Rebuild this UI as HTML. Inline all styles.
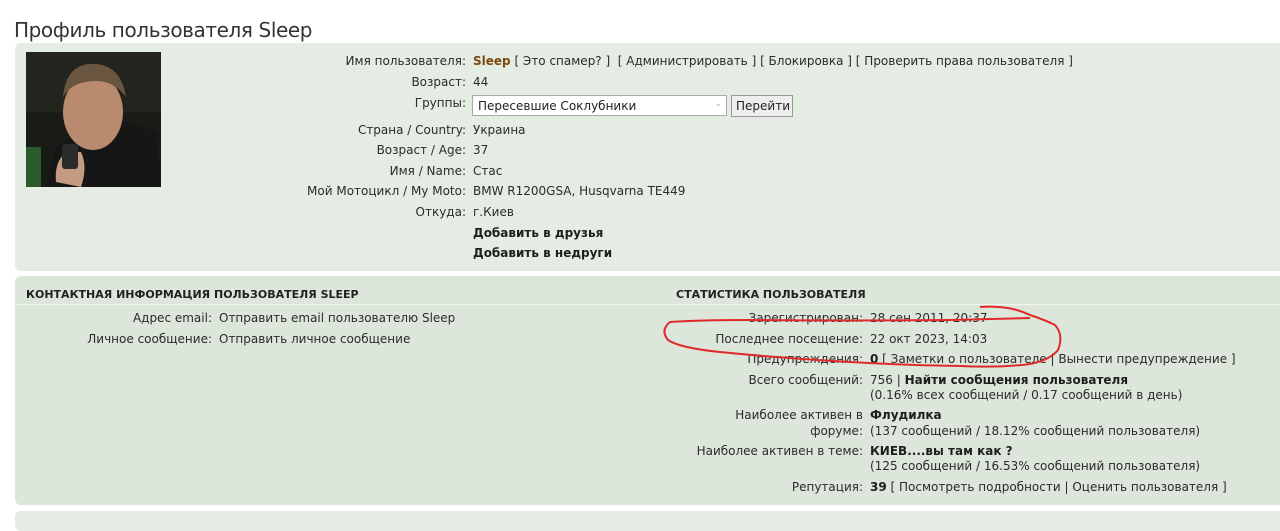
<!DOCTYPE html>
<html><head><meta charset="utf-8"><style>
*{margin:0;padding:0;box-sizing:border-box}
body{width:1280px;height:517px;background:#fff;font-family:"DejaVu Sans","Liberation Sans",sans-serif;font-size:12px;color:#2b2b2b;position:relative;overflow:hidden}
.h1{position:absolute;left:14px;top:18px;font-size:20px;color:#333;font-family:"DejaVu Sans",sans-serif;font-weight:normal;letter-spacing:-0.4px}
.p1{position:absolute;left:15px;top:43px;width:1280px;height:228px;background:#e4ece3;border-radius:6px}
.p2{position:absolute;left:15px;top:276px;width:1280px;height:229px;background:#dce6da;border-radius:6px}
.p3{position:absolute;left:15px;top:511px;width:1280px;height:20px;background:#e4ece3;border-radius:6px}
.l{position:absolute;text-align:right;white-space:nowrap}
.v{position:absolute;white-space:nowrap}
.t{position:absolute;left:0;top:1px;width:1280px;height:517px}
b{color:#1e1e1e}
.hd{position:absolute;font-size:11px;font-weight:bold;color:#222;white-space:nowrap}
.line{position:absolute;height:1px;background:#f2f6f1}
</style></head><body>
<div class="h1">Профиль пользователя Sleep</div>
<div class="p1"></div>
<div class="p2"></div>
<div class="p3"></div>

<svg style="position:absolute;left:26px;top:52px" width="135" height="135" viewBox="0 0 135 135">
<rect width="135" height="135" fill="#1a1a16"/>
<rect x="0" y="0" width="135" height="60" fill="#23241d"/>
<path d="M20 135 L30 95 L60 75 L100 70 L130 80 L135 135Z" fill="#161616"/>
<ellipse cx="67" cy="60" rx="30" ry="38" fill="#b88a6e"/>
<path d="M37 45 Q40 10 70 12 Q95 14 100 45 Q85 25 60 30 Q45 32 37 45Z" fill="#6a5640"/>
<rect x="0" y="95" width="15" height="40" fill="#2a5a2a"/>
<path d="M30 130 Q28 110 40 100 L55 100 Q62 115 55 135Z" fill="#c49a80"/>
<rect x="36" y="92" width="16" height="25" fill="#2b2b2b" rx="3"/>
</svg>

<div class="t">
<div class="l" style="right:814px;top:53px">Имя пользователя:</div>
<div class="v" style="left:473px;top:53px"><b style="color:#7a4a10">Sleep</b> [ Это спамер? ]&nbsp; [ Администрировать ] [ Блокировка ] [ Проверить права пользователя ]</div>
<div class="l" style="right:814px;top:74px">Возраст:</div><div class="v" style="left:473px;top:74px">44</div>
<div class="l" style="right:814px;top:95px">Группы:</div>
<div class="v" style="left:472px;top:94px;width:255px;height:21px;background:#fff;border:1px solid #aaa;padding:3px 0 0 5px;color:#222">Пересевшие Соклубники<span style="position:absolute;right:4px;top:3px;color:#aaa;font-size:9px">⌄</span></div>
<div class="v" style="left:731px;top:94px;width:62px;height:22px;background:#eee;border:1px solid #999;padding:3px 0 0 4px;color:#222">Перейти</div>
<div class="l" style="right:814px;top:122px">Страна / Country:</div><div class="v" style="left:473px;top:122px">Украина</div>
<div class="l" style="right:814px;top:142px">Возраст / Age:</div><div class="v" style="left:473px;top:142px">37</div>
<div class="l" style="right:814px;top:163px">Имя / Name:</div><div class="v" style="left:473px;top:163px">Стас</div>
<div class="l" style="right:814px;top:183px">Мой Мотоцикл / My Moto:</div><div class="v" style="left:473px;top:183px">BMW R1200GSA, Husqvarna TE449</div>
<div class="l" style="right:814px;top:204px">Откуда:</div><div class="v" style="left:473px;top:204px">г.Киев</div>
<div class="v" style="left:473px;top:225px"><b>Добавить в друзья</b></div>
<div class="v" style="left:473px;top:245px"><b>Добавить в недруги</b></div>

<div class="hd" style="left:26px;top:287px">КОНТАКТНАЯ ИНФОРМАЦИЯ ПОЛЬЗОВАТЕЛЯ SLEEP</div>
<div class="hd" style="left:676px;top:287px">СТАТИСТИКА ПОЛЬЗОВАТЕЛЯ</div>
<div class="line" style="left:15px;top:303px;width:1265px"></div>
<div class="l" style="right:1068px;top:310px">Адрес email:</div><div class="v" style="left:219px;top:310px">Отправить email пользователю Sleep</div>
<div class="l" style="right:1068px;top:331px">Личное сообщение:</div><div class="v" style="left:219px;top:331px">Отправить личное сообщение</div>

<div class="l" style="right:417px;top:310px">Зарегистрирован:</div><div class="v" style="left:870px;top:310px">28 сен 2011, 20:37</div>
<div class="l" style="right:417px;top:331px">Последнее посещение:</div><div class="v" style="left:870px;top:331px">22 окт 2023, 14:03</div>
<div class="l" style="right:417px;top:351px">Предупреждения:</div><div class="v" style="left:870px;top:351px"><b>0</b> [ Заметки о пользователе | Вынести предупреждение ]</div>
<div class="l" style="right:417px;top:372px">Всего сообщений:</div><div class="v" style="left:870px;top:372px">756 | <b>Найти сообщения пользователя</b></div>
<div class="v" style="left:870px;top:387px">(0.16% всех сообщений / 0.17 сообщений в день)</div>
<div class="l" style="right:417px;top:407px">Наиболее активен в</div><div class="v" style="left:870px;top:407px"><b>Флудилка</b></div>
<div class="l" style="right:417px;top:423px">форуме:</div><div class="v" style="left:870px;top:423px">(137 сообщений / 18.12% сообщений пользователя)</div>
<div class="l" style="right:417px;top:443px">Наиболее активен в теме:</div><div class="v" style="left:870px;top:443px"><b>КИЕВ....вы там как ?</b></div>
<div class="v" style="left:870px;top:458px">(125 сообщений / 16.53% сообщений пользователя)</div>
<div class="l" style="right:417px;top:479px">Репутация:</div><div class="v" style="left:870px;top:479px"><b>39</b> [ Посмотреть подробности | Оценить пользователя ]</div>
</div>

<svg style="position:absolute;left:0;top:0" width="1280" height="517">
<path d="M980 307 Q1010 305 1030 315 Q1045 320 1055 325 Q1064 335 1058 350 Q1050 360 1030 364 Q1000 368 960 366 Q900 365 850 362 Q780 358 720 352 Q680 348 668 340 Q660 330 670 322 Q700 320 750 320 Q850 321 950 320 L1030 318" fill="none" stroke="#e02a2a" stroke-width="2"/>
</svg>
</body></html>
